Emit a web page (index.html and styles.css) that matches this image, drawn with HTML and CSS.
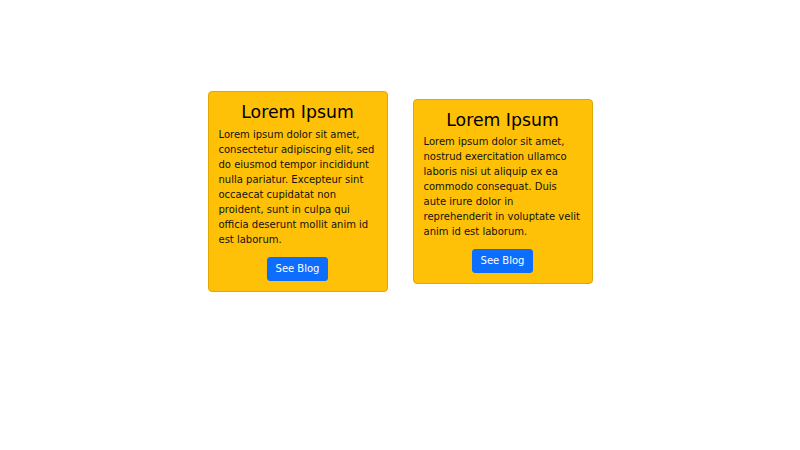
FILE: index.html
```html
<!DOCTYPE html>
<html>
<head>
<meta charset="utf-8">
<link rel="stylesheet" href="styles.css">
</head>
<body>
<div class="row">
  <div class="card">
    <h2 class="title">Lorem Ipsum</h2>
    <p class="text">Lorem ipsum dolor sit amet, consectetur adipiscing elit, sed do eiusmod tempor incididunt nulla pariatur. Excepteur sint occaecat cupidatat non proident, sunt in culpa qui officia deserunt mollit anim id est laborum.</p>
    <a class="btn">See Blog</a>
  </div>
  <div class="card">
    <h2 class="title">Lorem Ipsum</h2>
    <p class="text">Lorem ipsum dolor sit amet, nostrud exercitation ullamco laboris nisi ut aliquip ex ea commodo consequat. Duis aute irure dolor in reprehenderit in voluptate velit anim id est laborum.</p>
    <a class="btn">See Blog</a>
  </div>
</div>
</body>
</html>
```
FILE: styles.css
```css
html, body {
  margin: 0;
  padding: 0;
  background: #fff;
  font-family: "DejaVu Sans", sans-serif;
  color: #212529;
}
.row {
  display: flex;
  justify-content: center;
  align-items: center;
  gap: 25px;
  padding-top: 91px;
}
.card {
  box-sizing: border-box;
  width: 180px;
  background: #ffc107;
  border: 1px solid #e0a800;
  border-radius: 4px;
  padding: 10px;
  display: flex;
  flex-direction: column;
  align-items: center;
}
.title {
  margin: 0 0 4px 0;
  font-size: 17.3px;
  font-weight: 400;
  line-height: 1.2;
  color: #000;
  text-align: center;
}
.text {
  margin: 0 0 10px 0;
  font-size: 10px;
  line-height: 15px;
  color: #111;
  align-self: stretch;
}
.btn {
  display: inline-block;
  box-sizing: border-box;
  height: 24px;
  padding: 0 8px;
  line-height: 22px;
  font-size: 10px;
  color: #fff;
  background: #0d6efd;
  border: 1px solid #0d6efd;
  border-radius: 3px;
  text-align: center;
}
```
